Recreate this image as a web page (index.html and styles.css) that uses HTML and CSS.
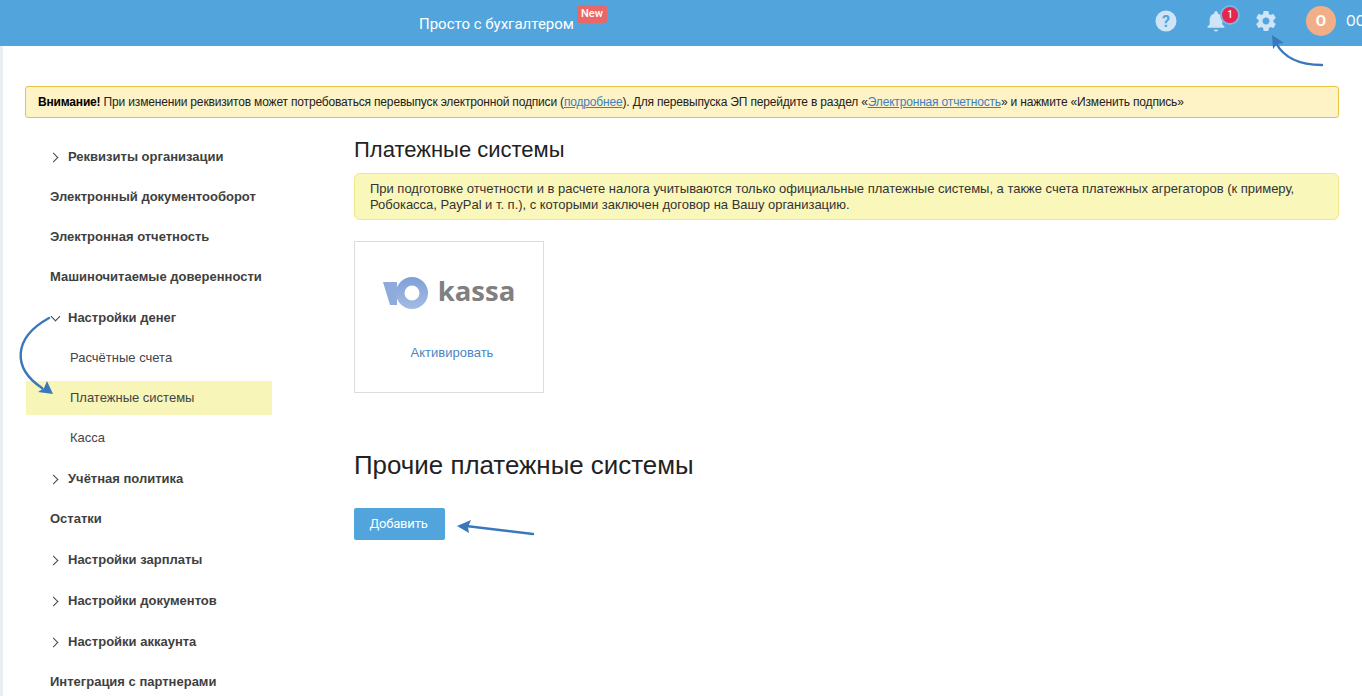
FILE: index.html
```html
<!DOCTYPE html>
<html lang="ru">
<head>
<meta charset="utf-8">
<title>Платежные системы</title>
<link rel="stylesheet" href="styles.css">
</head>
<body>
<header class="topbar">
  <div class="brand"><span class="brand-text">Просто с бухгалтером</span><span class="new-badge">New</span></div>
  <div class="top-icons">
    <svg class="ico-help" width="22" height="22" viewBox="0 0 22 22"><circle cx="11" cy="11" r="10.5" fill="#cfe4f6"/><text x="11" y="16.5" text-anchor="middle" class="help-mark">?</text></svg>
    <div class="bell-wrap">
      <svg width="22" height="24" viewBox="0 0 22 24"><path d="M11 2.2c1 0 1.7.7 1.7 1.6v.6c3 .8 4.6 3.3 4.6 6.4v4.4l2.2 2.6v1H2.500v-1l2.200-2.600v-4.400c0-3.100 1.600-5.600 4.600-6.400v-.6c0-.9.700-1.600 1.700-1.600zM8.800 20.800h4.400c0 .9-1 1.700-2.200 1.700s-2.200-.8-2.200-1.700z" fill="#cfe4f6"/></svg>
      <span class="bell-count">1</span>
    </div>
    <svg class="ico-gear" width="24" height="24" viewBox="0 0 24 24"><path fill="#cfe4f6" d="M19.430 12.980c.04-.32.07-.64.07-.98s-.03-.66-.07-.98l2.110-1.650c.19-.15.24-.42.12-.64l-2-3.460c-.12-.22-.39-.3-.61-.22l-2.490 1c-.52-.4-1.080-.73-1.690-.98l-.38-2.650C14.460 2.180 14.250 2 14 2h-4c-.25 0-.46.180-.49.420l-.38 2.650c-.61.250-1.170.590-1.690.980l-2.490-1c-.23-.09-.49 0-.61.220l-2 3.460c-.13.220-.07.490.12.640l2.110 1.650c-.04.320-.07.650-.07.980s.03.660.07.980l-2.110 1.650c-.19.150-.24.420-.12.640l2 3.460c.12.220.39.300.61.220l2.490-1c.52.400 1.080.730 1.690.980l.38 2.650c.03.240.24.420.49.420h4c.25 0 .46-.18.49-.42l.38-2.650c.61-.25 1.170-.59 1.690-.98l2.490 1c.23.090.49 0 .61-.22l2-3.460c.12-.22.07-.49-.12-.64l-2.110-1.650zM12 15.500c-1.930 0-3.500-1.570-3.500-3.500s1.570-3.500 3.500-3.500 3.500 1.570 3.500 3.500-1.570 3.500-3.500 3.500z"/></svg>
    <div class="user"><span class="avatar">О</span><span class="user-name">ООО</span></div>
  </div>
</header>

<div class="page">
  <div class="alert-top"><b>Внимание!</b> При изменении реквизитов может потребоваться перевыпуск электронной подписи (<a href="#">подробнее</a>). Для перевыпуска ЭП перейдите в раздел «<a href="#">Электронная отчетность</a>» и нажмите «Изменить подпись»</div>

  <div class="columns">
    <nav class="side">
      <div class="item bold caret-right">Реквизиты организации</div>
      <div class="item bold">Электронный документооборот</div>
      <div class="item bold">Электронная отчетность</div>
      <div class="item bold">Машиночитаемые доверенности</div>
      <div class="item bold caret-down tall">Настройки денег</div>
      <div class="item sub">Расчётные счета</div>
      <div class="item sub active"><span>Платежные системы</span></div>
      <div class="item sub">Касса</div>
      <div class="item bold caret-right tall">Учётная политика</div>
      <div class="item bold">Остатки</div>
      <div class="item bold caret-right tall">Настройки зарплаты</div>
      <div class="item bold caret-right tall">Настройки документов</div>
      <div class="item bold caret-right tall">Настройки аккаунта</div>
      <div class="item bold">Интеграция с партнерами</div>
    </nav>

    <main class="content">
      <h2 class="title">Платежные системы</h2>
      <div class="note">При подготовке отчетности и в расчете налога учитываются только официальные платежные системы, а также счета платежных агрегаторов (к примеру, Робокасса, PayPal и т. п.), с которыми заключен договор на Вашу организацию.</div>
      <div class="card">
        <div class="logo">
          <svg width="46" height="32" viewBox="0 0 46 32"><defs><linearGradient id="g" x1="0" y1="0" x2="0" y2="1"><stop offset="0" stop-color="#7f9fd6"/><stop offset="1" stop-color="#a3bce4"/></linearGradient></defs><path d="M0 5H14V28H7z" fill="#8fabdc"/><path fill-rule="evenodd" d="M29 0a16 16 0 1 1 0 32 16 16 0 0 1 0-32zm0 8.500a7.500 7.500 0 1 0 0 15 7.500 7.500 0 0 0 0-15z" fill="url(#g)"/></svg>
          <span class="logo-word">kassa</span>
        </div>
        <a class="activate" href="#">Активировать</a>
      </div>
      <h2 class="title-big">Прочие платежные системы</h2>
      <button class="btn" type="button">Добавить</button>
    </main>
  </div>
</div>

<svg class="arrows" width="1362" height="696" viewBox="0 0 1362 696">
  <g fill="none" stroke="#3b78bb" stroke-width="2.4" stroke-linecap="round">
    <path d="M1322 65C1300 65 1284 58 1276 43"/>
    <path d="M49 318C13 338 12 368 42 388"/>
    <path d="M533 534L466 526"/>
  </g>
  <g fill="#3b78bb">
    <path d="M1272 35L1284 43L1277 44L1273 49z"/>
    <path d="M53 394L38 392L44 388L47 381z"/>
    <path d="M457 526L471 520L468 527L469 533z"/>
  </g>
</svg>
</body>
</html>
```

FILE: styles.css
```css
* { box-sizing: border-box; }
html, body { margin: 0; height: 696px; overflow: hidden; }
body { background: #e9eef3; font-family: "Liberation Sans", Arial, sans-serif; color: #333; font-size: 13px; position: relative; }

.topbar { height: 46px; background: #52a5dc; display: flex; align-items: center; position: relative; }
.brand { margin-left: 419px; display: flex; align-items: flex-start; font-family: Roboto, sans-serif; color: #fff; }
.brand-text { font-size: 15px; line-height: 20px; margin-top: 1px; }
.new-badge { background: #ea6767; font-size: 11px; font-weight: 500; line-height: 18px; height: 18px; padding: 0 4px; border-radius: 3px; margin: -8px 0 0 3px; }
.top-icons { position: absolute; left: 1155px; top: 0; height: 46px; width: 207px; display: flex; align-items: center; overflow: hidden; }
.ico-help { flex: none; margin-top: -4px; }
.help-mark { font: 700 16px Roboto, sans-serif; fill: #52a5dc; }
.bell-wrap { flex: none; position: relative; width: 22px; height: 24px; margin-left: 28px; margin-top: -5px; }
.bell-wrap svg { display: block; }
.bell-count { position: absolute; left: 15px; top: -4px; width: 20px; height: 20px; border-radius: 50%; background: #e5264f; border: 2px solid #7ab6e4; color: #fff; font: 500 10px/16px Roboto, sans-serif; text-align: center; }
.ico-gear { flex: none; margin-left: 27px; margin-top: -4px; }
.user { display: flex; align-items: center; margin-left: 28px; flex: none; margin-top: -4px; }
.avatar { width: 30px; height: 30px; border-radius: 50%; background: #f2ae87; color: #fff; font: 700 15px/30px Roboto, sans-serif; text-align: center; }
.user-name { font: 400 14px Roboto, sans-serif; color: #fff; margin-left: 10px; }

.page { margin-left: 3px; background: #fff; height: 650px; padding: 40px 23px 0 22px; }
.alert-top { height: 32px; width: 1314px; background: #fdf3c7; border: 1px solid #e7c345; border-radius: 3px; padding-left: 12px; font-size: 12px; letter-spacing: -.17px; line-height: 30px; color: #222; white-space: nowrap; }
.alert-top b { color: #000; }
.alert-top a { color: #3f7fbf; }

.columns { display: flex; align-items: flex-start; }
.side { width: 246px; margin-left: 1px; padding-top: 19px; flex: none; }
.item { height: 40px; line-height: 40px; padding-left: 24px; position: relative; white-space: nowrap; }
.item.tall { height: 41px; line-height: 41px; }
.bold { font-weight: 700; color: #3f3f3f; }
.caret-right, .caret-down { padding-left: 42px; }
.caret-right::before { content: ""; position: absolute; left: 24px; top: 50%; width: 6px; height: 6px; margin-top: -3px; border-top: 1.500px solid #444; border-right: 1.500px solid #444; transform: rotate(45deg); }
.caret-down::before { content: ""; position: absolute; left: 26px; top: 50%; width: 6px; height: 6px; margin-top: -5px; border-bottom: 1.500px solid #444; border-right: 1.500px solid #444; transform: rotate(45deg); }
.sub { padding-left: 44px; color: #444; font-weight: 400; }
.active::before { content: ""; position: absolute; left: 0; right: 0; top: 3px; height: 34px; background: #f8f5b9; }
.active span { position: relative; }

.content { margin-left: 82px; flex: 1; }
.title { margin: 20px 0 0; font-size: 22px; font-weight: 400; line-height: 24px; color: #222; }
.note { margin-top: 11px; width: 985px; height: 47px; background: #faf7bb; border: 1px solid #efe78a; border-radius: 6px; padding: 7px 15px; font-size: 13px; letter-spacing: -.02px; line-height: 16px; color: #333; }
.card { margin-top: 21px; width: 190px; height: 152px; border: 1px solid #ddd; display: flex; flex-direction: column; align-items: center; }
.logo { display: flex; align-items: center; margin-top: 35px; height: 32px; }
.logo svg { display: block; }
.logo-word { font: 700 27.500px/32px "Open Sans", sans-serif; color: #808080; margin: 0 0 4px 9px; }
.activate { margin: 36px 0 0 6px; color: #4b86c4; text-decoration: none; font-size: 13px; line-height: 16px; }
.title-big { margin: 56px 0 0; font-size: 25.900px; font-weight: 400; line-height: 32px; color: #222; }
.btn { display: block; margin-top: 27px; width: 91px; height: 32px; background: #52a5dc; border: 0; border-radius: 2px; color: #fff; font: 400 13px Roboto, sans-serif; letter-spacing: -.2px; padding: 0 2px 2px 0; }

.arrows { position: absolute; left: 0; top: 0; pointer-events: none; }
```
